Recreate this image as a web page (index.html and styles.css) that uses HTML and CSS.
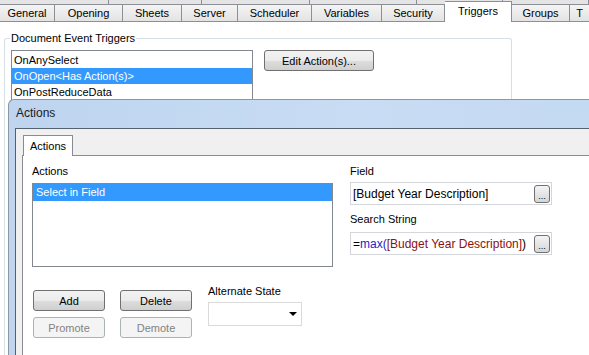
FILE: index.html
```html
<!DOCTYPE html>
<html lang="en">
<head>
    <meta charset="UTF-8">
    <meta name="viewport" content="width=device-width, initial-scale=1.0">
    <link rel="stylesheet" href="styles.css">
</head>
<body>
    <!-- second row of property tabs, mostly scrolled out of view -->
    <div class="back-tabs">
        <div></div><div></div><div></div><div></div><div></div><div></div>
    </div>
    <div class="tabs">
        <div class="tab">General</div>
        <div class="tab">Opening</div>
        <div class="tab">Sheets</div>
        <div class="tab">Server</div>
        <div class="tab">Scheduler</div>
        <div class="tab">Variables</div>
        <div class="tab">Security</div>
        <div class="tab active">Triggers</div>
        <div class="tab">Groups</div>
        <div class="tab">T</div>
    </div>

    <div class="page">
        <fieldset class="group">
            <legend>Document Event Triggers</legend>
            <div class="group-row">
                <ul class="listbox triggers">
                    <li>OnAnySelect</li>
                    <li class="selected">OnOpen&lt;Has Action(s)&gt;</li>
                    <li>OnPostReduceData</li>
                </ul>
                <button class="btn edit-btn">Edit Action(s)...</button>
            </div>
        </fieldset>
    </div>

    <!-- Actions dialog on top of the document properties -->
    <div class="dialog">
        <div class="titlebar">Actions</div>
        <div class="client">
            <div class="dlg-tabs">
                <div class="dlg-tab">Actions</div>
            </div>
            <div class="panel">
                <div class="left-col">
                    <div class="label">Actions</div>
                    <ul class="listbox actions">
                        <li class="selected">Select in Field</li>
                    </ul>
                    <div class="bottom-row">
                        <div class="btn-grid">
                            <button class="btn">Add</button>
                            <button class="btn">Delete</button>
                            <button class="btn" disabled>Promote</button>
                            <button class="btn" disabled>Demote</button>
                        </div>
                        <div class="alt-state">
                            <div class="label">Alternate State</div>
                            <div class="combo"><span class="arrow"></span></div>
                        </div>
                    </div>
                </div>
                <div class="right-col">
                    <div class="label">Field</div>
                    <div class="textbox">
                        <span>[Budget Year Description]</span>
                        <button class="dots">...</button>
                    </div>
                    <div class="label search-label">Search String</div>
                    <div class="textbox">
                        <span>=<span class="fn">max(</span><span class="fld">[Budget Year Description]</span>)</span>
                        <button class="dots">...</button>
                    </div>
                </div>
            </div>
        </div>
    </div>
</body>
</html>
```

FILE: styles.css
```css
body {
    margin: 0;
    background: #fff;
    font-family: "Liberation Sans", Arial, sans-serif;
    font-size: 11px;
    color: #000;
    overflow: hidden;
    height: 355px;
    position: relative;
}

/* property sheet tabs */
.back-tabs {
    display: grid;
    grid-template-columns: 109px 93px 108px 107px 86px 1fr;
    height: 4px;
}
.back-tabs div {
    background: #e4e4e4;
    border-right: 1px solid #8c8f96;
}

.tabs {
    display: grid;
    grid-template-columns: 55px 68px 59px 56px 74px 70px 63px 67px 58px 1fr;
    height: 18px;
}
.tab {
    border-top: 1px solid #8c8f96;
    border-right: 1px solid #8c8f96;
    border-bottom: 1px solid #8c8f96;
    background: linear-gradient(#f4f4f4, #e3e3e3);
    text-align: center;
    line-height: 17px;
    white-space: nowrap;
    overflow: hidden;
}
.tab:last-child {
    border-right: none;
}
.tab.active {
    margin-top: -3px;
    border-bottom: none;
    background: #fff;
    line-height: 18px;
}

/* document event triggers group */
.group {
    margin: 9px 0 0 4px;
    width: 508px;
    height: 324px;
    box-sizing: border-box;
    border: 1px solid #d5dfe5;
    border-bottom: none;
    border-radius: 3px 3px 0 0;
    padding: 5px 6px 0;
}
.group legend {
    padding: 0 1px;
    line-height: 14px;
    margin-left: -1px;
}
.group-row {
    display: flex;
    align-items: flex-start;
    gap: 11px;
}

.listbox {
    list-style: none;
    margin: 0;
    padding: 1px 0 0;
    border: 1px solid #828790;
    background: #fff;
    box-sizing: border-box;
}
.listbox li {
    padding-left: 2px;
    line-height: 16px;
    white-space: nowrap;
}
.listbox li.selected {
    background: #3399ff;
    color: #fff;
}
.triggers {
    width: 242px;
    height: 60px;
}

.btn {
    font-family: inherit;
    font-size: 11px;
    color: #000;
    border: 1px solid #707070;
    border-radius: 3px;
    background: linear-gradient(#f2f2f2 0%, #ebebeb 50%, #dddddd 51%, #cfcfcf 100%);
    padding: 0;
    cursor: pointer;
}
.btn:disabled {
    border-color: #adb2b5;
    background: #f4f4f4;
    color: #838383;
}
.edit-btn {
    width: 110px;
    height: 21px;
}

/* dialog */
.dialog {
    position: absolute;
    left: 8px;
    top: 99px;
    width: 581px;
    height: 256px;
    border: 1px solid #8a97a5;
    border-right: none;
    border-bottom: none;
    border-radius: 6px 0 0 0;
    background: linear-gradient(90deg, #bed4ef, #c8dcf4 60%, #c4d9f2);
    padding-left: 6px;
    box-sizing: border-box;
    overflow: hidden;
}
.titlebar {
    height: 28px;
    line-height: 27px;
    padding-left: 1px;
    font-size: 12px;
    color: #1a1a1a;
}
.client {
    border-top: 1px solid #56616f;
    border-left: 1px solid #56616f;
    background: #f0f0f0;
    height: 100%;
    padding-left: 6px;
}
.dlg-tabs {
    display: flex;
    padding-top: 6px;
}
.dlg-tab {
    width: 50px;
    height: 21px;
    margin-left: 1px;
    margin-bottom: -1px;
    border: 1px solid #898c95;
    border-bottom: none;
    background: #fff;
    box-sizing: border-box;
    text-align: center;
    line-height: 21px;
}
.panel {
    display: flex;
    border-top: 1px solid #898c95;
    border-left: 1px solid #898c95;
    background: #fff;
    height: 100%;
    padding: 8px 0 0 9px;
}
.label {
    line-height: 14px;
    white-space: nowrap;
}

.left-col {
    width: 301px;
}
.left-col > .label {
    margin-bottom: 5px;
}
.actions {
    width: 301px;
    height: 84px;
    padding-top: 0;
}
.actions li {
    line-height: 17px;
    padding-left: 3px;
}

.bottom-row {
    display: flex;
    margin-top: 17px;
}
.btn-grid {
    display: grid;
    grid-template-columns: 72px 72px;
    grid-auto-rows: 21px;
    column-gap: 15px;
    row-gap: 6px;
    margin-top: 6px;
    margin-left: 1px;
}
.alt-state {
    margin-left: 16px;
}
.combo {
    width: 94px;
    height: 24px;
    margin-top: 4px;
    border: 1px solid #dadada;
    box-sizing: border-box;
    display: flex;
    justify-content: flex-end;
    align-items: center;
    padding-right: 4px;
}
.arrow {
    width: 0;
    height: 0;
    border-left: 4px solid transparent;
    border-right: 4px solid transparent;
    border-top: 4px solid #000;
}

.right-col {
    margin-left: 17px;
}
.right-col > .label {
    margin-bottom: 4px;
}
.right-col > .search-label {
    margin-top: 7px;
    margin-bottom: 6px;
}
.textbox {
    width: 202px;
    height: 23px;
    border: 1px solid #d3d6da;
    box-sizing: border-box;
    display: flex;
    align-items: center;
    padding-left: 2px;
    font-size: 12px;
    white-space: nowrap;
}
.textbox .fn {
    color: #2323c8;
}
.textbox .fld {
    color: #8b1010;
}
.dots {
    margin-left: auto;
    margin-right: 1px;
    width: 16px;
    height: 18px;
    border: 1px solid #707070;
    border-radius: 3px;
    background: linear-gradient(#f4f4f4, #d6d6d6);
    font-size: 9px;
    line-height: 20px;
    padding: 0;
    color: #000;
    font-family: inherit;
}
```
